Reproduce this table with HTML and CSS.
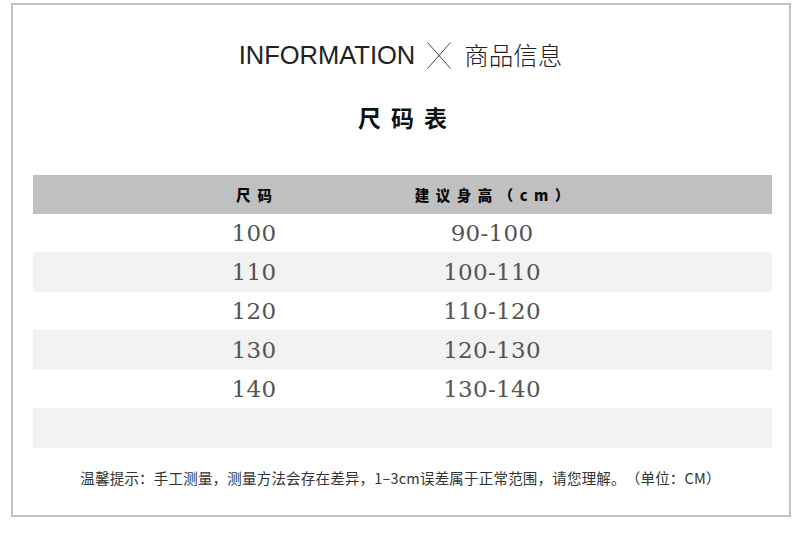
FILE: index.html
```html
<!DOCTYPE html>
<html lang="zh-CN">
<head>
<meta charset="utf-8">
<title>INFORMATION 商品信息</title>
<link rel="stylesheet" href="styles.css">
</head>
<body>
<div class="frame">
  <div class="title">
    <span class="title-en">INFORMATION</span>
    <svg class="cross" width="24" height="27" viewBox="0 0 24 27" aria-hidden="true">
      <line x1="0.5" y1="0.5" x2="23.5" y2="26.5" stroke="#444" stroke-width="1"/>
      <line x1="23.5" y1="0.5" x2="0.5" y2="26.5" stroke="#444" stroke-width="1"/>
    </svg>
    <span class="title-cn">商品信息</span>
  </div>
  <div class="subtitle">尺码表</div>
  <div class="table">
    <div class="row head">
      <div class="cell h1">尺码</div>
      <div class="cell h2">建议身高（cm）</div>
    </div>
    <div class="row odd"><div class="cell num">100</div><div class="cell num">90-100</div></div>
    <div class="row even"><div class="cell num">110</div><div class="cell num">100-110</div></div>
    <div class="row odd"><div class="cell num">120</div><div class="cell num">110-120</div></div>
    <div class="row even"><div class="cell num">130</div><div class="cell num">120-130</div></div>
    <div class="row odd"><div class="cell num">140</div><div class="cell num">130-140</div></div>
    <div class="row even"><div class="cell num"></div><div class="cell num"></div></div>
  </div>
  <div class="note">温馨提示：手工测量，测量方法会存在差异，1–3cm误差属于正常范围，请您理解。（单位：CM）</div>
</div>
</body>
</html>
```
FILE: styles.css
```css
html, body {
  margin: 0;
  padding: 0;
  background: #ffffff;
}

body {
  width: 800px;
  height: 559px;
  overflow: hidden;
}

.frame {
  box-sizing: border-box;
  margin: 3px 0 0 11px;
  width: 780px;
  height: 514px;
  border: 2px solid #c3c3c3;
  padding: 35px 17px 0 20px;
  display: flex;
  flex-direction: column;
}

.title {
  height: 30px;
  display: flex;
  align-items: center;
  justify-content: center;
  padding-right: 4px;
}

.title-en {
  font-family: "Liberation Sans", Arial, sans-serif;
  font-size: 25.5px;
  line-height: 30px;
  color: #222;
}

.cross {
  display: block;
  margin: 0 13px 0 12px;
}

.title-cn {
  font-family: "Noto Sans CJK SC", sans-serif;
  font-size: 24.5px;
  font-weight: 300;
  line-height: 30px;
  color: #222;
}

.subtitle {
  margin-top: 32px;
  height: 30px;
  line-height: 30px;
  text-align: center;
  font-family: "Noto Sans CJK SC", sans-serif;
  font-weight: 700;
  font-size: 23px;
  letter-spacing: 10px;
  text-indent: 10px;
  color: #111;
}

.table {
  margin-top: 43px;
  width: 739px;
  display: flex;
  flex-direction: column;
}

.row {
  display: flex;
  align-items: center;
  padding-left: 102px;
}

.row.head {
  height: 39px;
  background: #c0c0c0;
}

.row.odd {
  height: 38px;
  background: #ffffff;
}

.row.even {
  height: 40px;
  background: #f2f2f2;
}

.cell {
  width: 238px;
  text-align: center;
}

.h1, .h2 {
  font-family: "Noto Sans CJK SC", sans-serif;
  font-weight: 900;
  font-size: 14.5px;
  color: #0a0a0a;
}

.h1 {
  letter-spacing: 7px;
  text-indent: 7px;
}

.h2 {
  letter-spacing: 6.5px;
  text-indent: 6.5px;
}

.num {
  font-family: "DejaVu Serif", serif;
  font-size: 23px;
  letter-spacing: 0.3px;
  color: #555;
  line-height: 30px;
}

.note {
  margin-top: 20px;
  height: 20px;
  line-height: 20px;
  text-align: center;
  font-family: "Noto Sans CJK SC", sans-serif;
  font-size: 14.5px;
  letter-spacing: 0.2px;
  color: #333;
  padding-right: 4px;
  text-spacing-trim: space-all;
}
```
